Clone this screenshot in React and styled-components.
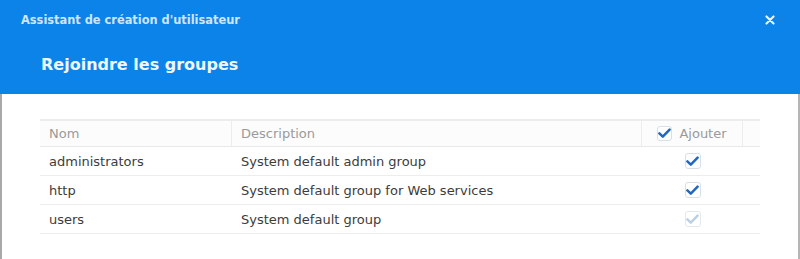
import React from "react";
import styled, { createGlobalStyle } from "styled-components";

const Global = createGlobalStyle`
  html, body { margin: 0; padding: 0; background: #ffffff; }
  body { width: 800px; height: 259px; overflow: hidden; font-family: "DejaVu Sans", Verdana, sans-serif; }
`;

const Dialog = styled.div`
  width: 800px;
  height: 259px;
  display: flex;
  flex-direction: column;
  background: #ffffff;
`;

const Header = styled.header`
  height: 94px;
  background: #0b83e8;
  display: flex;
  flex-direction: column;
  box-sizing: border-box;
  padding-right: 2px;
`;

const TitleBar = styled.div`
  height: 40px;
  display: flex;
  align-items: center;
  justify-content: space-between;
  padding: 0 22px 0 21px;
`;

const WindowTitle = styled.span`
  font-family: "DejaVu Sans", Verdana, sans-serif;
  font-weight: bold;
  font-size: 11.4px;
  color: #cfe5fb;
`;

const CloseButton = styled.button`
  border: 0;
  background: none;
  padding: 0;
  width: 12px;
  height: 12px;
  display: flex;
  align-items: center;
  justify-content: center;
  cursor: pointer;
`;

const StepTitle = styled.h1`
  margin: 0;
  padding: 15px 0 0 41px;
  font-family: "DejaVu Sans", Verdana, sans-serif;
  font-weight: bold;
  font-size: 16px;
  color: #eef7ff;
`;

const Body = styled.div`
  flex: 1;
  border-left: 2px solid #a9a9a9;
  border-right: 2px solid #b5b5b5;
  padding: 25px 38px 0 38px;
`;

const Grid = styled.div`
  display: flex;
  flex-direction: column;
  font-family: "DejaVu Sans", Verdana, sans-serif;
  font-size: 13px;
`;

const Row = styled.div`
  display: grid;
  grid-template-columns: 192px 410px 101px 1fr;
  height: ${(p) => (p.$head ? "28px" : "29px")};
  box-sizing: border-box;
  border-top: ${(p) => (p.$head ? "2px solid #ececec" : "0")};
  border-bottom: 1px solid ${(p) => (p.$head ? "#e9e9e9" : "#ededed")};
  background: ${(p) => (p.$head ? "#fcfcfc" : "#ffffff")};
`;

const Cell = styled.div`
  display: flex;
  align-items: center;
  justify-content: ${(p) => (p.$center ? "center" : "flex-start")};
  padding-left: ${(p) => (p.$center ? "0" : "9px")};
  color: ${(p) => (p.$head ? "#9a9a9a" : "#3c3c3c")};
  border-right: ${(p) => (p.$sep ? "1px solid #ececec" : "0")};
  gap: 7px;
  white-space: nowrap;
`;

const Box = styled.span`
  width: ${(p) => (p.$small ? "15px" : "16px")};
  height: ${(p) => (p.$small ? "15px" : "16px")};
  box-sizing: border-box;
  border: 1px solid ${(p) => (p.$disabled ? "#e3e8ee" : "#d8dfe7")};
  border-radius: 3px;
  background: #ffffff;
  display: flex;
  align-items: center;
  justify-content: center;
`;

function Check({ disabled, small }) {
  return (
    <Box $disabled={disabled} $small={small}>
      <svg width="13" height="11" viewBox="0 0 13 11">
        <path
          d="M1.4 5.4 L4.8 8.6 L11.6 1.6"
          fill="none"
          stroke={disabled ? "#bcd0e5" : "#2168bd"}
          strokeWidth="2.5"
          strokeLinecap="round"
          strokeLinejoin="round"
        />
      </svg>
    </Box>
  );
}

const rows = [
  { name: "administrators", desc: "System default admin group", disabled: false },
  { name: "http", desc: "System default group for Web services", disabled: false },
  { name: "users", desc: "System default group", disabled: true },
];

export default function App() {
  return (
    <>
      <Global />
      <Dialog>
        <Header>
          <TitleBar>
            <WindowTitle>Assistant de création d'utilisateur</WindowTitle>
            <CloseButton aria-label="Fermer">
              <svg width="10" height="10" viewBox="0 0 10 10">
                <path d="M1.5 1.5 L8.5 8.5 M8.5 1.5 L1.5 8.5" stroke="#e6f2ff" strokeWidth="2.2" strokeLinecap="round" />
              </svg>
            </CloseButton>
          </TitleBar>
          <StepTitle>Rejoindre les groupes</StepTitle>
        </Header>
        <Body>
          <Grid>
            <Row $head>
              <Cell $head $sep>Nom</Cell>
              <Cell $head $sep>Description</Cell>
              <Cell $head $sep $center>
                <Check small />
                Ajouter
              </Cell>
              <Cell $head />
            </Row>
            {rows.map((r) => (
              <Row key={r.name}>
                <Cell>{r.name}</Cell>
                <Cell>{r.desc}</Cell>
                <Cell $center>
                  <Check disabled={r.disabled} />
                </Cell>
                <Cell />
              </Row>
            ))}
          </Grid>
        </Body>
      </Dialog>
    </>
  );
}
